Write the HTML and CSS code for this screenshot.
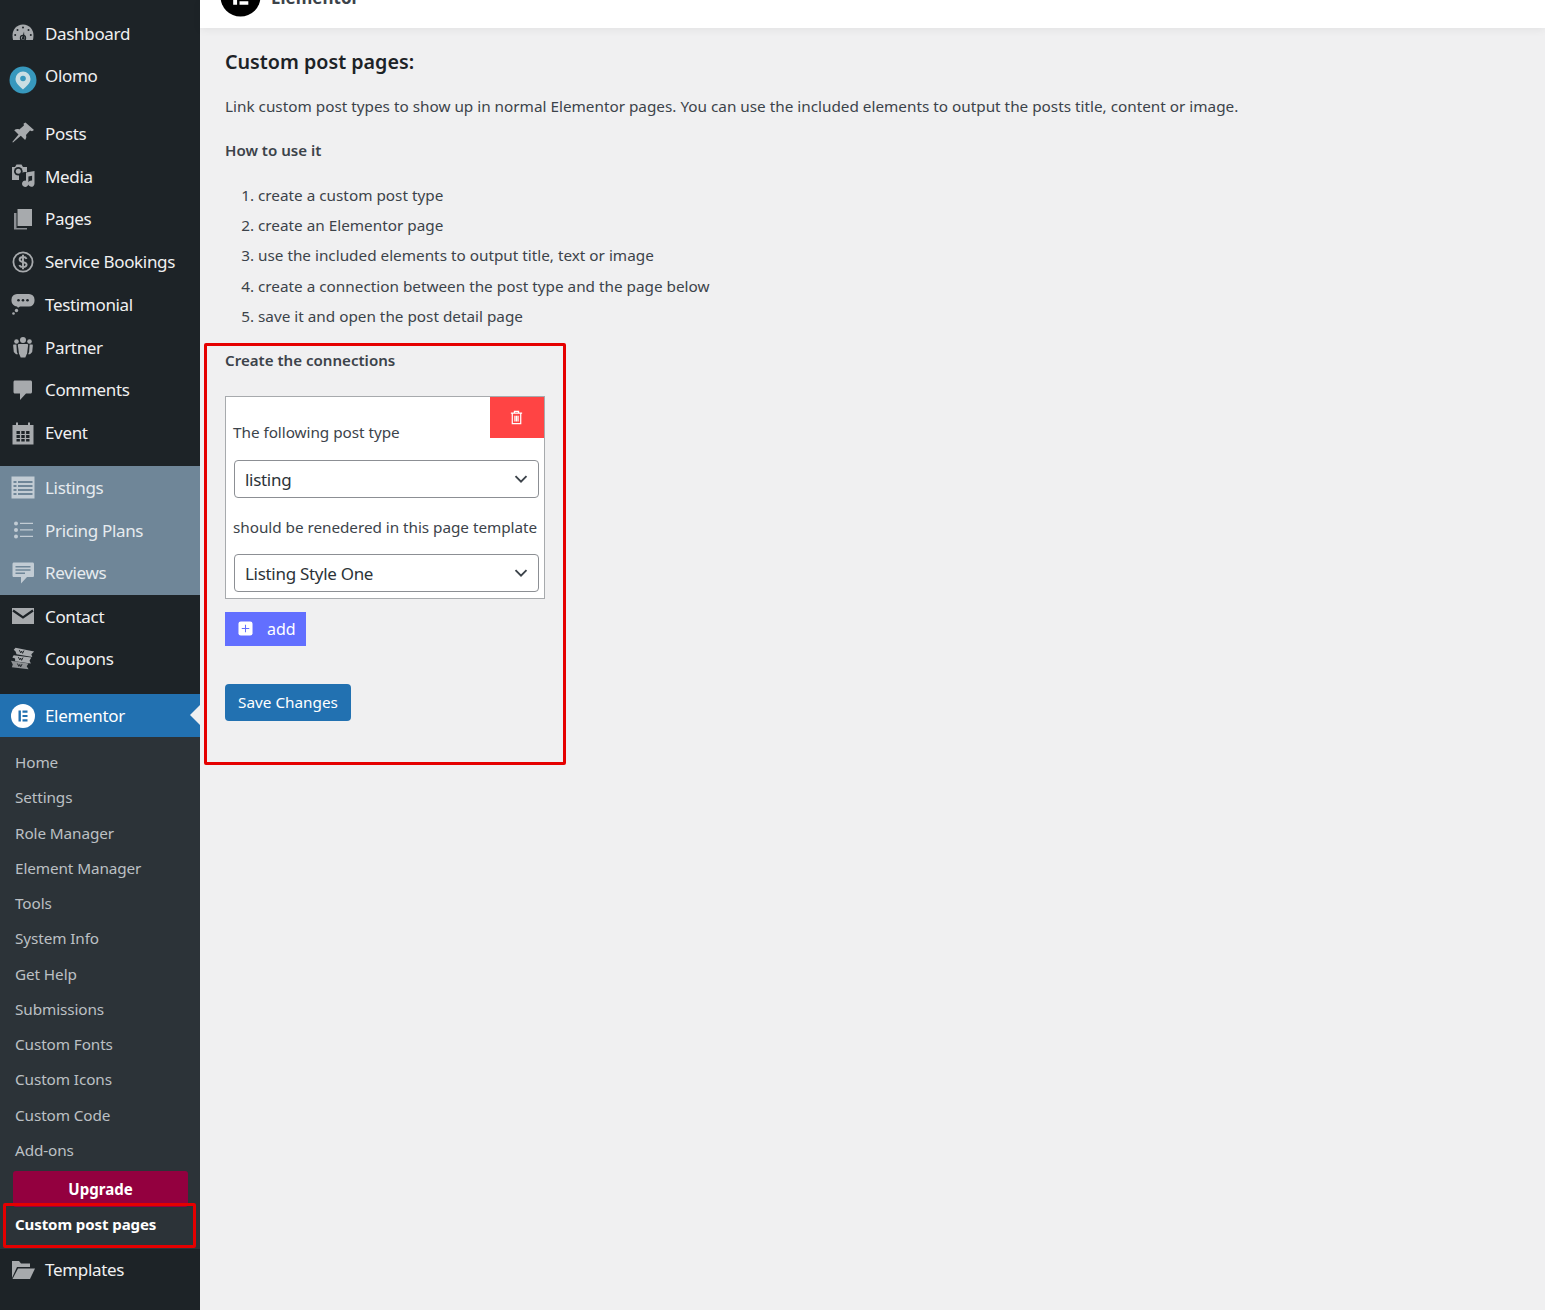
FILE: index.html
```html
<!DOCTYPE html>
<html lang="en">
<head>
<meta charset="utf-8">
<title>Custom post pages</title>
<link rel="stylesheet" href="styles.css">
</head>
<body>
<div class="page">
<nav class="sidebar">
  <a class="row"><span class="ico"><svg viewBox="0 0 26 26"><path d="M13 3.500C6.500 3.500 2.500 8.700 2.500 14.500c0 1.500.2 3 .6 4.500h19.800c.4-1.500.6-3 .6-4.500 0-5.800-4-11-10.500-11z" fill="#a7aaad"/><path d="M11.500 18.500l2.500-8 .7 8z" fill="#1d2327"/><circle cx="13" cy="17" r="2.600" fill="none" stroke="#1d2327" stroke-width="1.200"/><g fill="#1d2327"><circle cx="13" cy="6.500" r="1"/><circle cx="7.500" cy="9" r="1"/><circle cx="18.500" cy="9" r="1"/><circle cx="5.200" cy="14" r="1"/><circle cx="20.800" cy="14" r="1"/></g></svg></span>Dashboard</a>
  <a class="row"><span class="ico"><svg class="olomo" viewBox="0 0 28 28"><circle cx="14" cy="14" r="13.500" fill="#3798bd"/><path d="M14 5.500a7.500 7.500 0 0 0-7.500 7.500c0 4.500 5 8 7.500 10.500 2.500-2.500 7.500-6 7.500-10.500A7.500 7.500 0 0 0 14 5.500z" fill="#c9dee3"/><circle cx="14" cy="12.500" r="2.800" fill="#3798bd"/></svg></span><span class="up">Olomo</span></a>
  <div class="sep-a"></div>
  <a class="row"><span class="ico"><svg viewBox="0 0 26 26"><path d="M15.500 2.500l8.500 7.500-2 1.200-2-.7-4 4.500c.7 2 .2 3.600-.9 4.900l-4.300-4.200L3 22.500l-.7-.5 6.200-7.600-4.300-4.100c1.400-1.100 3.200-1.700 5.100-.8l4.600-4.100-.3-2z" fill="#a7aaad"/></svg></span>Posts</a>
  <a class="row"><span class="ico"><svg viewBox="0 0 26 26"><path d="M2 4h3l1.500-2.500h5L13 4h4v5h-2l-6 1v5H2z" fill="#a7aaad"/><circle cx="8.300" cy="8.300" r="4.300" fill="#1d2327"/><circle cx="8.300" cy="8.300" r="2.500" fill="#a7aaad"/><path d="M2 15h7v2H2z" fill="#a7aaad"/><path d="M16 9.500l8.500-1.500v12.500a3.200 3.200 0 1 1-2.400-3v-4.800l-3.700.7v7.300a3.200 3.200 0 1 1-2.400-3z" fill="#a7aaad"/></svg></span>Media</a>
  <a class="row"><span class="ico"><svg viewBox="0 0 26 26"><path d="M7.500 3H22v17H7.500z" fill="#a7aaad"/><path d="M4 7h2.500v15H17v1.500H4z" fill="#8c8f94"/></svg></span>Pages</a>
  <a class="row"><span class="ico"><svg viewBox="0 0 26 26"><circle cx="13" cy="13" r="9.600" fill="none" stroke="#a7aaad" stroke-width="1.800"/><path d="M16.600 9.800C16 8.500 14.600 8 13 8c-1.900 0-3.400 1-3.400 2.600 0 3.700 7 1.700 7 5 0 1.600-1.600 2.500-3.600 2.500-1.700 0-3.100-.7-3.700-2M13 5.800v14.400" fill="none" stroke="#a7aaad" stroke-width="1.900"/></svg></span>Service Bookings</a>
  <a class="row"><span class="ico"><svg viewBox="0 0 26 26"><path d="M7 3h12a5.500 5.500 0 0 1 5.500 5.500v1.500a5.500 5.500 0 0 1-5.500 5.500h-9l-2 1.200-1-1.300A5.500 5.500 0 0 1 1.500 10V8.500A5.500 5.500 0 0 1 7 3z" fill="#a7aaad"/><g fill="#1d2327"><circle cx="8.500" cy="9.300" r="1.300"/><circle cx="13" cy="9.300" r="1.300"/><circle cx="17.500" cy="9.300" r="1.300"/></g><circle cx="6.500" cy="19.500" r="1.700" fill="#a7aaad"/><circle cx="3.500" cy="22.500" r="1.300" fill="#a7aaad"/></svg></span>Testimonial</a>
  <a class="row"><span class="ico"><svg viewBox="0 0 26 26"><g fill="#a7aaad"><circle cx="13" cy="6" r="3"/><circle cx="6.500" cy="7.500" r="2.300"/><circle cx="19.500" cy="7.500" r="2.300"/><path d="M9 10h8c.8 0 1.200.6 1.100 1.400l-1 7.800-1.800 4.300h-4.600l-1.800-4.300-1-7.800C7.800 10.600 8.200 10 9 10z"/><path d="M3.800 10.600h2.600l.5 7.400 1 2.300H6L3.800 18 3.200 12c0-.8 0-1.400.6-1.400zM22.200 10.600h-2.600l-.5 7.400-1 2.300H20l2.200-2.300.6-6c0-.8 0-1.400-.6-1.400z"/></g></svg></span>Partner</a>
  <a class="row"><span class="ico"><svg viewBox="0 0 26 26"><path d="M5 3.500h15.500c.9 0 1.500.6 1.500 1.500v10c0 .9-.6 1.500-1.500 1.500H16L10 23v-6.500H5c-.9 0-1.500-.6-1.500-1.500V5c0-.9.6-1.500 1.500-1.500z" fill="#a7aaad"/></svg></span>Comments</a>
  <a class="row"><span class="ico"><svg viewBox="0 0 26 26"><path d="M2.500 5H6V2.500h2V5h10V2.500h2V5h3.500v19.500h-21z" fill="#a7aaad"/><g fill="#1d2327"><path d="M6.500 11h3.400v3H6.500zM11.300 11h3.400v3h-3.400zM16.100 11h3.400v3h-3.400zM6.500 15h3.400v3H6.500zM11.300 15h3.400v3h-3.400zM16.100 15h3.400v3h-3.400zM6.500 19h3.400v2.500H6.500zM11.300 19h3.400v2.500h-3.400zM16.100 19h3.400v2.500h-3.400z"/></g></svg></span>Event</a>
  <div class="sep-b"></div>
  <div class="group">
    <a class="row"><span class="ico"><svg viewBox="0 0 26 26"><path d="M1.500 2.500h23v22h-23z" fill="#c2ccd4"/><g fill="#6f8698"><path d="M3.500 7h3v2h-3zM8 7h14.500v2H8zM3.500 11h3v2h-3zM8 11h14.500v2H8zM3.500 15h3v2h-3zM8 15h14.500v2H8zM3.500 19h3v2h-3zM8 19h14.500v2H8z"/></g></svg></span>Listings</a>
    <a class="row"><span class="ico"><svg viewBox="0 0 26 26"><g fill="#c2ccd4"><circle cx="6" cy="6.500" r="2"/><circle cx="6" cy="13" r="2"/><circle cx="6" cy="19.500" r="2"/><path d="M10 5.800h13v1.300H10zM10 12.300h13v1.300H10zM10 18.800h13v1.300H10z"/></g></svg></span>Pricing Plans</a>
    <a class="row"><span class="ico"><svg viewBox="0 0 26 26"><path d="M4 2.500h18.500c1 0 1.500.6 1.500 1.500v11.500c0 1-.5 1.500-1.500 1.500H17l-6 6.500V17H4c-1 0-1.500-.5-1.500-1.500V4C2.500 3.100 3 2.500 4 2.500z" fill="#c2ccd4"/><g fill="#6f8698"><path d="M5.500 6h15v1.500h-15zM5.500 9.300h15v1.500h-15zM5.500 12.500h9.500V14H5.500z"/></g></svg></span>Reviews</a>
  </div>
  <a class="row after-group"><span class="ico"><svg viewBox="0 0 26 26"><path d="M2 5h22v16H2z" fill="#a7aaad"/><path d="M3 7.500l10 7 10-7" fill="none" stroke="#1d2327" stroke-width="2.200"/></svg></span>Contact</a>
  <a class="row"><span class="ico"><svg viewBox="0 0 28 26"><path d="M6 2l20 4-3 3 1 3-17-3-1-3-2-2z" fill="#a7aaad"/><path d="M4 10l19 2.500-2 3.500 1.500 3-17-2.500 0-3-3-1z" fill="#a7aaad"/><path d="M1 16l19 3-2 3 2 3L2 23l1-3z" fill="#8e9194"/><path d="M10 4.500l1.500 3 1-2 1 2.500 1.500-3M9 12l1.500 3 1-2 1 2.500 1.500-3M8 19l1.500 3 1-2 1 2.500 1.500-3" fill="none" stroke="#1d2327" stroke-width="1"/></svg></span>Coupons</a>
  <div class="sep-c"></div>
  <a class="row active"><span class="ico"><svg viewBox="0 0 26 26"><circle cx="13" cy="13" r="12" fill="#fff"/><path d="M8.500 7.500h2.400v11H8.500zM12.500 7.500h5v2.200h-5zM12.500 11.900h5v2.200h-5zM12.500 16.300h5v2.200h-5z" fill="#2271b1"/></svg></span>Elementor</a>
  <div class="sub">
    <a class="sub-row">Home</a>
    <a class="sub-row">Settings</a>
    <a class="sub-row">Role Manager</a>
    <a class="sub-row">Element Manager</a>
    <a class="sub-row">Tools</a>
    <a class="sub-row">System Info</a>
    <a class="sub-row">Get Help</a>
    <a class="sub-row">Submissions</a>
    <a class="sub-row">Custom Fonts</a>
    <a class="sub-row">Custom Icons</a>
    <a class="sub-row">Custom Code</a>
    <a class="sub-row">Add-ons</a>
    <a class="upgrade">Upgrade</a>
    <a class="sub-row current">Custom post pages</a>
  </div>
  <a class="row"><span class="ico"><svg viewBox="0 0 26 26"><path d="M2 4h7l2 2.500h9V10H7L2 21z" fill="#a7aaad"/><path d="M8 11.500h17L20 22H2.500z" fill="#a7aaad"/></svg></span>Templates</a>
  <div class="mark mark-side"></div>
</nav>
<main class="main">
  <header class="topbar">
    <span class="logo"><svg viewBox="0 0 42 42"><circle cx="21" cy="21" r="20.500" fill="#000"/><path d="M13.500 12.500h4v17h-4zM20 12.500h9v3.600h-9zM20 19.200h9v3.600h-9zM20 25.900h9v3.600h-9z" fill="#fff"/></svg></span>
    <span class="brand">Elementor</span>
  </header>
  <section class="content">
    <h2 class="title">Custom post pages:</h2>
    <p class="intro">Link custom post types to show up in normal Elementor pages. You can use the included elements to output the posts title, content or image.</p>
    <h3 class="sub-title how">How to use it</h3>
    <ol class="steps">
      <li>create a custom post type</li>
      <li>create an Elementor page</li>
      <li>use the included elements to output title, text or image</li>
      <li>create a connection between the post type and the page below</li>
      <li>save it and open the post detail page</li>
    </ol>
    <h3 class="sub-title conn">Create the connections</h3>
    <div class="card">
      <button class="trash"><svg viewBox="0 0 16 16"><path d="M5.800 3V1.500h4.400V3M2 3.300h12M3.500 3.500v11h9v-11M6.300 6v6.300M8 6v6.300M9.700 6v6.300" fill="none" stroke="#fff" stroke-width="1.300"/></svg></button>
      <div class="label first">The following post type</div>
      <div class="select">listing<svg viewBox="0 0 16 16"><path d="M2.500 5.200L8 10.700l5.500-5.500" fill="none" stroke="#3c434a" stroke-width="1.900"/></svg></div>
      <div class="label second">should be renedered in this page template</div>
      <div class="select">Listing Style One<svg viewBox="0 0 16 16"><path d="M2.500 5.200L8 10.700l5.500-5.500" fill="none" stroke="#3c434a" stroke-width="1.900"/></svg></div>
    </div>
    <button class="add"><svg viewBox="0 0 16 16"><rect x="0.500" y="0.500" width="15" height="15" rx="2.500" fill="#fff"/><path d="M8 4v8M4 8h8" stroke="#626fff" stroke-width="1.100"/></svg><span>add</span></button>
    <button class="save">Save Changes</button>
  </section>
  <div class="mark mark-main"></div>
</main>
</div>
</body>
</html>
```
FILE: styles.css
```css
* { box-sizing: border-box; }
html, body { margin: 0; height: 100%; overflow: hidden; }
body { background: #f0f0f1; color: #3c434a; font-family: "Noto Sans", "Open Sans", sans-serif; font-size: 15.3px; }
.page { display: flex; height: 1310px; }

.sidebar { position: relative; width: 200px; flex: none; background: #1d2327; padding-top: 12.500px; color: #f0f0f1; }
.row { display: flex; align-items: center; height: 42.750px; font-size: 17px; letter-spacing: -0.33px; }
.ico { width: 45px; flex: none; display: flex; justify-content: center; }
.ico svg { width: 26px; height: 26px; display: block; }
.ico .olomo { width: 28px; height: 28px; margin-top: 6px; }
.up { margin-top: -2.500px; }
.sep-a { height: 14px; }
.sep-b { height: 12px; }
.sep-c { height: 14.250px; }
.group { background: #6f8698; color: #e6ebef; height: 129px; }
.after-group { height: 42px; }
.active { position: relative; background: #2271b1; color: #fff; height: 43px; }
.active::after { content: ""; position: absolute; right: 0; top: 11px; border: 10.500px solid transparent; border-right-color: #f0f0f1; border-left-width: 0; }
.sub { background: #2c3338; height: 511.500px; padding-top: 7.500px; }
.sub-row { display: flex; align-items: center; height: 35.250px; padding-left: 15px; font-size: 15.300px; color: #bcc0c4; letter-spacing: -0.1px; }
.upgrade { display: flex; align-items: center; justify-content: center; height: 36px; margin: 3.500px 12px 0 13px; background: #93003f; border-radius: 3px; color: #fff; font-weight: 700; font-size: 15.100px; }
.current { height: 35px; color: #fff; font-weight: 700; font-size: 15.050px; margin-top: -1px; }

.main { position: relative; flex: 1; min-width: 0; }
.topbar { height: 28px; background: #fff; box-shadow: 0 2px 8px rgba(0,0,0,.06); display: flex; align-items: flex-end; overflow: hidden; padding: 0 0 11px 20px; gap: 10px; }
.logo { flex: none; width: 41px; height: 41px; }
.logo svg { width: 41px; height: 41px; display: block; }
.brand { flex: none; font-size: 17px; font-weight: 700; line-height: 22px; color: #3c434a; margin-bottom: 8.500px; }
.content { padding: 20px 0 0 25px; }
.title { margin: 0; font-size: 19.700px; line-height: 28px; font-weight: 600; color: #1d2327; }
.intro { margin: 18px 0 0; line-height: 24px; }
.sub-title { margin: 0; font-size: 15.100px; font-weight: 600; line-height: 24px; }
.how { margin-top: 20px; }
.steps { margin: 18px 0 0; padding: 0 0 0 33px; }
.steps li { height: 30.200px; line-height: 30.200px; }
.conn { margin-top: 17px; }
.card { position: relative; width: 320px; height: 203px; margin-top: 24px; background: #fff; border: 1px solid #a7aaad; padding: 0 5px 0 8px; }
.trash { position: absolute; top: 0; right: 0; width: 54px; height: 41px; background: #ff4444; border: 0; padding: 0 2px 0 0; display: flex; align-items: center; justify-content: center; }
.trash svg { width: 15px; height: 15px; }
.label { line-height: 24px; margin-left: -1px; white-space: nowrap; letter-spacing: -0.04px; }
.first { padding-top: 23px; height: 63px; }
.second { margin-top: 17px; height: 39px; }
.select { display: flex; align-items: center; justify-content: space-between; height: 38px; width: 305px; border: 1px solid #8c8f94; border-radius: 4px; background: #fff; padding: 1px 9px 0 10px; font-size: 17px; letter-spacing: -0.3px; color: #2c3338; }
.select svg { width: 16px; height: 16px; }
.add { display: flex; align-items: center; gap: 14px; width: 81px; height: 34px; margin-top: 13px; padding: 0 0 0 13px; border: 0; background: #626fff; color: #fff; font: inherit; font-size: 16px; }
.add svg { width: 15px; height: 15px; flex: none; }
.add span { padding-top: 1px; }
.save { display: block; width: 126px; height: 37px; margin-top: 38px; padding: 0; border: 0; border-radius: 4px; background: #2271b1; color: #fff; font: inherit; }
.mark { position: absolute; border: 3px solid #e50000; pointer-events: none; border-radius: 2px; }
.mark-main { left: 4px; top: 343px; width: 362px; height: 422px; }
.mark-side { left: 3px; top: 1203px; width: 193px; height: 45px; }
```
